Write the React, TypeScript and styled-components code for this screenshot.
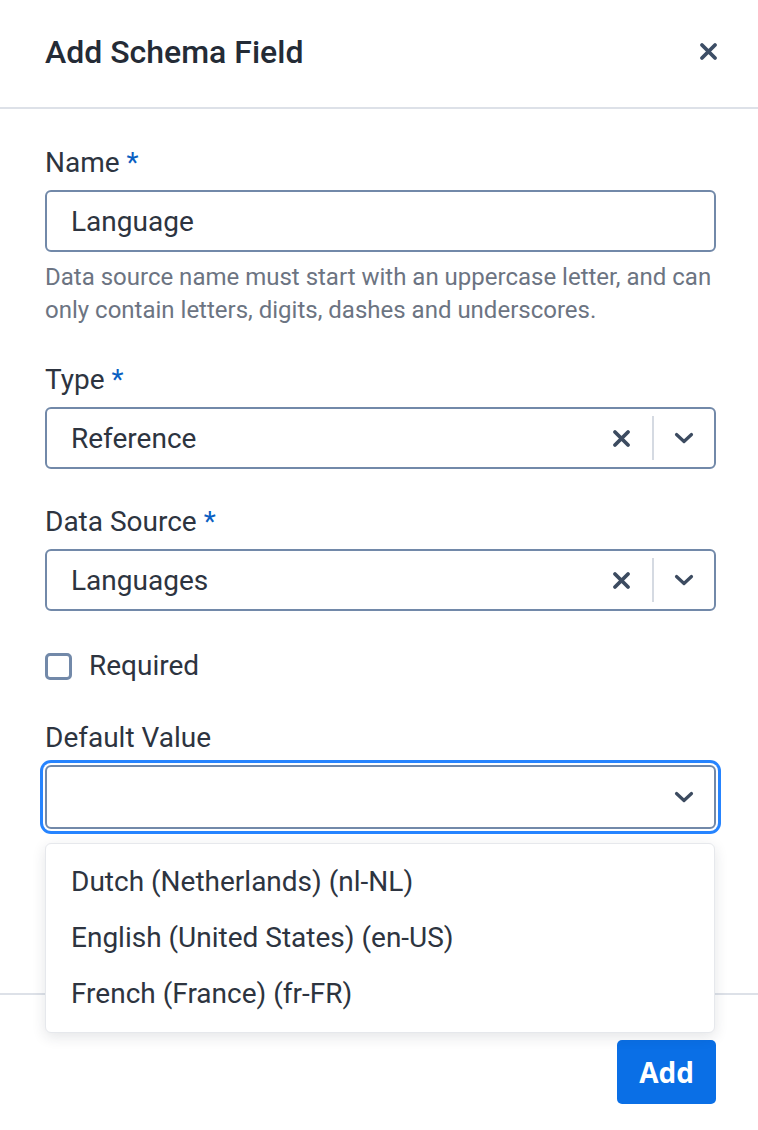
import { createGlobalStyle } from "styled-components";
import styled from "styled-components";

const GlobalStyle = createGlobalStyle`
  html, body {
    margin: 0;
    padding: 0;
    background: #ffffff;
  }
  body {
    font-family: Roboto, "Noto Sans", sans-serif;
    color: #2d3440;
  }
  * {
    box-sizing: border-box;
  }
`;

const options = [
  "Dutch (Netherlands) (nl-NL)",
  "English (United States) (en-US)",
  "French (France) (fr-FR)",
];

function CrossIcon({ size = 16 }: { size?: number }) {
  return (
    <svg width={size} height={size} viewBox="0 0 16 16" fill="none">
      <path
        d="M2.5 2.5 L13.5 13.5 M13.5 2.5 L2.5 13.5"
        stroke="currentColor"
        strokeWidth="3.2"
        strokeLinecap="round"
      />
    </svg>
  );
}

function ChevronIcon() {
  return (
    <svg width="20" height="12" viewBox="0 0 20 12" fill="none">
      <path
        d="M2.5 2.5 L10 9.5 L17.5 2.5"
        stroke="currentColor"
        strokeWidth="3.2"
        strokeLinecap="round"
        strokeLinejoin="round"
      />
    </svg>
  );
}

interface SelectProps {
  value?: string;
  clearable?: boolean;
  focused?: boolean;
}

function SelectBox({ value, clearable, focused }: SelectProps) {
  return (
    <SelectControl $focused={focused}>
      <SelectValue>{value}</SelectValue>
      <Indicators>
        {clearable && (
          <>
            <IndicatorButton $width={62}>
              <CrossIcon size={19} />
            </IndicatorButton>
            <Separator />
          </>
        )}
        <IndicatorButton $width={60}>
          <ChevronIcon />
        </IndicatorButton>
      </Indicators>
    </SelectControl>
  );
}

export default function App() {
  return (
    <Modal>
      <GlobalStyle />
      <Header>
        <Title>Add Schema Field</Title>
        <CloseButton>
          <CrossIcon size={19} />
        </CloseButton>
      </Header>

      <Body>
        <Field $gap={37}>
          <Label>
            Name <Required>*</Required>
          </Label>
          <TextInput defaultValue="Language" />
          <Help>
            Data source name must start with an uppercase letter, and can only
            contain letters, digits, dashes and underscores.
          </Help>
        </Field>

        <Field $gap={37}>
          <Label>
            Type <Required>*</Required>
          </Label>
          <SelectBox value="Reference" clearable />
        </Field>

        <Field $gap={39}>
          <Label>
            Data Source <Required>*</Required>
          </Label>
          <SelectBox value="Languages" clearable />
        </Field>

        <CheckRow>
          <CheckBox />
          <span>Required</span>
        </CheckRow>

        <Field>
          <Label>Default Value</Label>
          <MenuAnchor>
            <SelectBox focused />
            <Menu>
              {options.map((option) => (
                <MenuOption key={option}>{option}</MenuOption>
              ))}
            </Menu>
          </MenuAnchor>
        </Field>
      </Body>

      <Footer>
        <AddButton>Add</AddButton>
      </Footer>
    </Modal>
  );
}

const Modal = styled.div`
  display: flex;
  flex-direction: column;
  height: 100vh;
  background: white;
`;

const Header = styled.div`
  display: flex;
  align-items: center;
  justify-content: space-between;
  height: 109px;
  padding: 0 36px 4px 45px;
  border-bottom: 2px solid #dde1e8;
`;

const Title = styled.h1`
  margin: 0;
  font-size: 32px;
  font-weight: 500;
  color: #242b36;
`;

const CloseButton = styled.button`
  display: flex;
  align-items: center;
  justify-content: center;
  padding: 4px;
  background: none;
  border: none;
  color: #3d4e66;
  cursor: pointer;
`;

const Body = styled.div`
  flex: 1;
  padding: 38px 42px 0 45px;
`;

const Field = styled.div<{ $gap?: number }>`
  margin-bottom: ${(p) => p.$gap ?? 36}px;
`;

const Label = styled.div`
  font-size: 28px;
  line-height: 32px;
  margin-bottom: 11px;
  color: #2d3440;
`;

const Required = styled.span`
  color: #0a5fc2;
`;

const TextInput = styled.input`
  display: block;
  width: 100%;
  height: 62px;
  padding: 0 24px;
  border: 2px solid #7289a9;
  border-radius: 6px;
  font-family: Roboto, "Noto Sans", sans-serif;
  font-size: 28px;
  color: #2d3440;
  outline: none;
`;

const Help = styled.div`
  margin-top: 9px;
  font-size: 24px;
  line-height: 33px;
  color: #6c7482;
`;

const SelectControl = styled.div<{ $focused?: boolean }>`
  display: flex;
  align-items: center;
  height: ${(p) => (p.$focused ? "64px" : "62px")};
  padding-left: 24px;
  border: 2px solid #7289a9;
  border-radius: 6px;
  background: white;
  ${(p) => p.$focused && `box-shadow: 0 0 0 2px #ffffff, 0 0 0 5px #2684ff;`}
`;

const SelectValue = styled.div`
  flex: 1;
  font-size: 28px;
  color: #2d3440;
`;

const Indicators = styled.div`
  display: flex;
  align-items: center;
  align-self: stretch;
  padding: 7px 0;
`;

const IndicatorButton = styled.div<{ $width: number }>`
  display: flex;
  align-items: center;
  justify-content: center;
  width: ${(p) => p.$width}px;
  color: #3c4b60;
`;

const Separator = styled.div`
  align-self: stretch;
  width: 2px;
  background: #d5dae2;
`;

const CheckRow = styled.label`
  display: flex;
  align-items: center;
  gap: 17px;
  margin-bottom: 40px;
  font-size: 28px;
  line-height: 32px;
  color: #2d3440;
`;

const CheckBox = styled.span`
  width: 27px;
  height: 27px;
  border: 3px solid #7289a9;
  border-radius: 5px;
`;

const MenuAnchor = styled.div`
  position: relative;
`;

const Menu = styled.div`
  position: absolute;
  top: calc(100% + 14px);
  left: 0;
  right: 1px;
  padding: 9px 0 11px;
  background: white;
  border: 1px solid #e6e8ec;
  border-radius: 6px;
  box-shadow: 0 4px 14px rgba(30, 40, 60, 0.12);
  z-index: 2;
`;

const MenuOption = styled.div`
  height: 56px;
  display: flex;
  align-items: center;
  padding: 0 25px;
  font-size: 28px;
  color: #2d3440;
`;

const Footer = styled.div`
  display: flex;
  justify-content: flex-end;
  align-items: flex-start;
  height: 137px;
  padding: 45px 42px 0;
  border-top: 2px solid #dde1e8;
`;

const AddButton = styled.button`
  height: 64px;
  padding: 0 22px;
  border: none;
  border-radius: 5px;
  background: #0a6fe6;
  color: white;
  font-family: "Open Sans", Roboto, sans-serif;
  font-size: 28px;
  font-weight: 700;
  cursor: pointer;
`;
